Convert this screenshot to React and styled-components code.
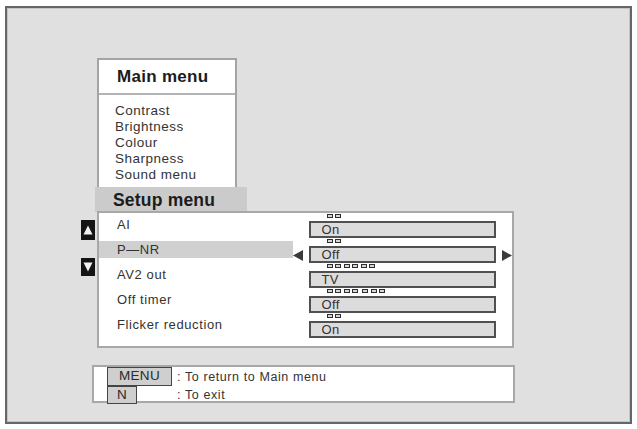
import React from "react";
import styled, { createGlobalStyle } from "styled-components";

const GlobalStyle = createGlobalStyle`
  html, body {
    margin: 0;
    background: #ffffff;
  }
  body {
    font-family: "Liberation Sans", Arial, sans-serif;
    color: #2a2a2a;
  }
  * {
    box-sizing: border-box;
  }
`;

const mainItems = ["Contrast", "Brightness", "Colour", "Sharpness", "Sound menu"];

const setupRows = [
  { label: "AI", value: "On", dots: [2] },
  { label: "P\u2014NR", value: "Off", dots: [2], active: true },
  { label: "AV2 out", value: "TV", dots: [6] },
  { label: "Off timer", value: "Off", dots: [4, 3] },
  { label: "Flicker reduction", value: "On", dots: [2] },
];

const App = () => {
  return (
    <>
      <GlobalStyle />
      <Screen>
        <MainMenu>
          <MenuTitle>Main menu</MenuTitle>
          <MenuList>
            {mainItems.map((item) => (
              <MenuItem key={item}>{item}</MenuItem>
            ))}
          </MenuList>
        </MainMenu>
        <SetupTab>Setup menu</SetupTab>
        <PanelRow>
          <ScrollColumn>
            <ScrollKey $size={20}>
              <svg width="10" height="10" viewBox="0 0 10 10">
                <polygon points="5,0.5 9.5,9.5 0.5,9.5" fill="#f2f2f2" />
              </svg>
            </ScrollKey>
            <ScrollKey $size={18}>
              <svg width="10" height="10" viewBox="0 0 10 10">
                <polygon points="0.5,0.5 9.5,0.5 5,9.5" fill="#f2f2f2" />
              </svg>
            </ScrollKey>
          </ScrollColumn>
          <SetupPanel>
            {setupRows.map((row) => (
              <SetupRow key={row.label}>
                <Label $active={row.active}>{row.label}</Label>
                <ArrowSlot>
                  {row.active && (
                    <svg width="10" height="11" viewBox="0 0 10 11">
                      <polygon points="10,0 10,11 0,5.5" fill="#3a3a3a" />
                    </svg>
                  )}
                </ArrowSlot>
                <ValueColumn>
                  <Dots>
                    {row.dots.map((count, g) => (
                      <DotGroup key={g}>
                        {Array.from({ length: count }).map((_, i) => (
                          <Dot key={i} />
                        ))}
                      </DotGroup>
                    ))}
                  </Dots>
                  <ValueBox>{row.value}</ValueBox>
                </ValueColumn>
                <ArrowSlot $right>
                  {row.active && (
                    <svg width="10" height="11" viewBox="0 0 10 11">
                      <polygon points="0,0 0,11 10,5.5" fill="#3a3a3a" />
                    </svg>
                  )}
                </ArrowSlot>
              </SetupRow>
            ))}
          </SetupPanel>
        </PanelRow>
        <HelpBox>
          <Key $width={65} $height={19}>MENU</Key>
          <HelpText>: To return to Main menu</HelpText>
          <Key $width={30} $height={18}>N</Key>
          <HelpText>: To exit</HelpText>
        </HelpBox>
      </Screen>
    </>
  );
};

const Screen = styled.div`
  margin: 6px 0 0 5px;
  width: 627px;
  height: 418px;
  border: 2px solid #666666;
  box-shadow: inset 0 0 0 1px #c4c4c4;
  background: #e0e0e0;
  padding-top: 50px;
  display: flex;
  flex-direction: column;
  align-items: flex-start;
`;

const MainMenu = styled.div`
  margin-left: 90px;
  width: 140px;
  height: 129px;
  border: 2px solid #a4a4a4;
  border-bottom: none;
  background: #ffffff;
`;

const MenuTitle = styled.div`
  height: 35px;
  padding-left: 18px;
  display: flex;
  align-items: center;
  font-size: 17px;
  font-weight: bold;
  letter-spacing: 0.3px;
  color: #1c1c1c;
  border-bottom: 2px solid #b4b4b4;
`;

const MenuList = styled.div`
  padding: 8px 0 0 16px;
`;

const MenuItem = styled.div`
  font-size: 13.5px;
  line-height: 16px;
  letter-spacing: 0.5px;
  color: #333333;
`;

const SetupTab = styled.div`
  margin-left: 88px;
  width: 152px;
  height: 25px;
  padding-left: 18px;
  background: #cbcbcb;
  font-size: 17.5px;
  font-weight: bold;
  line-height: 27px;
  letter-spacing: 0.2px;
  color: #1c1c1c;
`;

const PanelRow = styled.div`
  display: flex;
  margin-top: -1px;
  margin-left: 74px;
  gap: 2px;
`;

const ScrollColumn = styled.div`
  width: 14px;
  padding-top: 9px;
  display: flex;
  flex-direction: column;
  gap: 18px;
`;

const ScrollKey = styled.div`
  width: 14px;
  height: ${(p) => p.$size}px;
  background: #141414;
  display: flex;
  align-items: center;
  justify-content: center;
`;

const SetupPanel = styled.div`
  width: 417px;
  height: 137px;
  border: 2px solid #a8a8a8;
  background: #ffffff;
`;

const SetupRow = styled.div`
  display: flex;
  height: 25px;
  align-items: flex-start;
`;

const Label = styled.div`
  width: 194px;
  height: 17px;
  margin-top: 3px;
  padding-left: 18px;
  font-size: 13px;
  line-height: 17px;
  letter-spacing: 0.6px;
  color: #333333;
  background: ${(p) => (p.$active ? "#d0d0d0" : "transparent")};
`;

const ArrowSlot = styled.div`
  width: 16px;
  height: 17px;
  margin-top: 9px;
  display: flex;
  align-items: center;
  justify-content: ${(p) => (p.$right ? "flex-end" : "flex-start")};
  padding-right: ${(p) => (p.$right ? "0" : "6px")};
`;

const ValueColumn = styled.div`
  width: 188px;
  padding-top: 1px;
`;

const Dots = styled.div`
  height: 4px;
  margin: 0 0 3px 18px;
  display: flex;
  gap: 4px;
`;

const DotGroup = styled.div`
  display: flex;
  gap: 2.5px;
`;

const Dot = styled.span`
  width: 6px;
  height: 4px;
  border: 1px solid #2e2e2e;
  background: #d8d8d8;
`;

const ValueBox = styled.div`
  height: 17px;
  border: 2px solid #505050;
  background: #dcdcdc;
  padding-left: 11px;
  font-size: 13px;
  line-height: 14px;
  letter-spacing: 0.4px;
  color: #333333;
`;

const HelpBox = styled.div`
  margin: 17px 0 0 85px;
  width: 423px;
  height: 38px;
  border: 2px solid #a8a8a8;
  background: #ffffff;
  padding-left: 13px;
  display: grid;
  grid-template-columns: 70px auto;
  grid-template-rows: 19px 17px;
  align-items: center;
`;

const Key = styled.div`
  width: ${(p) => p.$width}px;
  height: ${(p) => p.$height}px;
  border: 1.5px solid #444444;
  background: #cfcfcf;
  font-size: 13.5px;
  line-height: 16px;
  letter-spacing: 0.3px;
  text-align: center;
  color: #2a2a2a;
  align-self: start;
`;

const HelpText = styled.div`
  font-size: 12.5px;
  letter-spacing: 0.6px;
  color: #333333;
`;

export default App;
